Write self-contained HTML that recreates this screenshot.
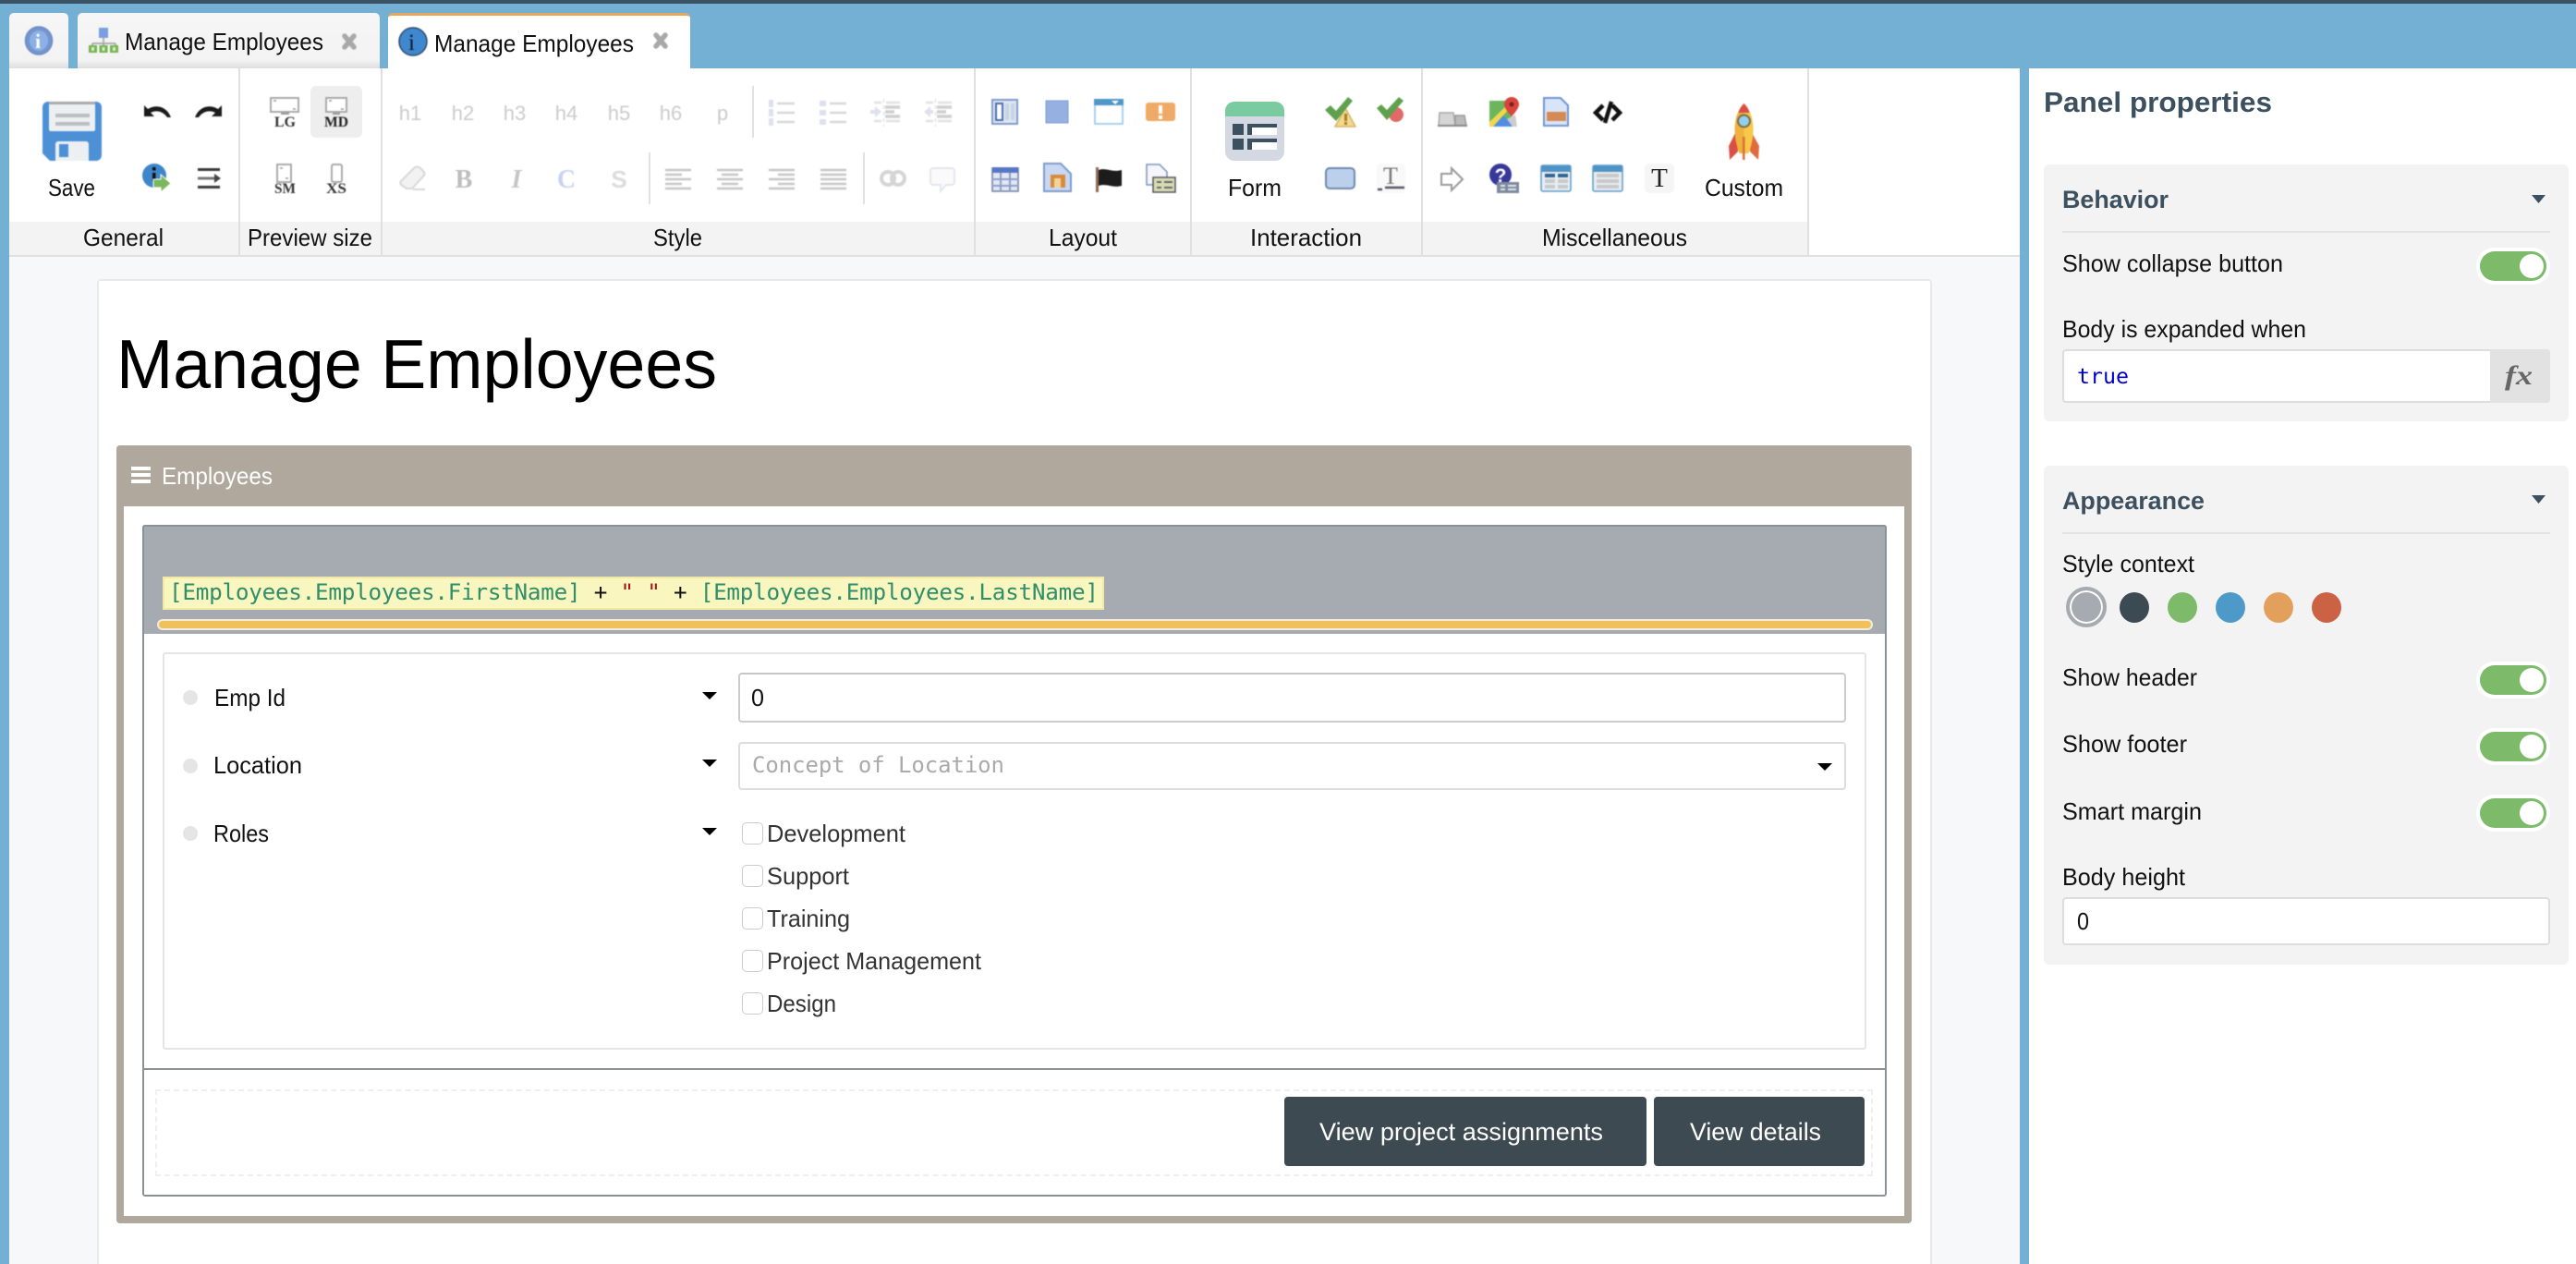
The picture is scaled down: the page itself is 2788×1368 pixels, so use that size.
<!DOCTYPE html>
<html lang="en">
<head>
<meta charset="utf-8">
<title>Manage Employees</title>
<style>
html,body{margin:0;padding:0;width:2788px;height:1368px;overflow:hidden;background:#74b0d4;font-family:"Liberation Sans",sans-serif}
.b{position:absolute;box-sizing:border-box}
.tog{position:absolute;width:72px;height:32px;border-radius:16px;background:#7dbb6b;box-shadow:0 0 0 4px #fff}
.tog:after{content:"";position:absolute;right:3px;top:3px;width:26px;height:26px;border-radius:50%;background:#fff}
.dot{position:absolute;width:32px;height:33px;border-radius:50%;top:641px}
.cb{position:absolute;left:803px;width:23px;height:24px;border:1.5px solid #ccc;border-radius:5px;background:#fff;box-sizing:border-box}
svg{position:absolute;left:0;top:0}
text{font-family:"Liberation Sans",sans-serif}
.m{font-family:"DejaVu Sans Mono",monospace}
.l{font-size:26px;fill:#111}
.bi{filter:blur(.5px)}
</style>
</head>
<body>
<div class="b" style="left:0;top:0;width:2788px;height:1368px;overflow:hidden">
<div class="b" style="left:0;top:0;width:2788px;height:4px;background:#3b5262"></div>

<!-- tabs -->
<div class="b" style="left:10px;top:14px;width:64px;height:60px;background:linear-gradient(#f6f6f6,#f3f3f3 85%,#dedede);border-radius:5px 5px 0 0"></div>
<div class="b" style="left:84px;top:14px;width:327px;height:60px;background:linear-gradient(#f6f6f6,#f3f3f3 85%,#dedede);border-radius:5px 5px 0 0"></div>
<div class="b" style="left:420px;top:14px;width:327px;height:61px;background:#fff;border-top:3px solid #e2a95c;border-radius:5px 5px 0 0"></div>

<!-- main area -->
<div class="b" style="left:10px;top:74px;width:2176px;height:1294px;background:#f7f8fa"></div>
<div class="b" style="left:10px;top:74px;width:2176px;height:204px;background:#fff;border-bottom:2px solid #e0e0e0"></div>
<div class="b" style="left:10px;top:240px;width:1947px;height:36px;background:#f3f3f3"></div>
<div class="b" style="left:258px;top:74px;width:2px;height:202px;background:#e0e0e0"></div>
<div class="b" style="left:412px;top:74px;width:2px;height:202px;background:#e0e0e0"></div>
<div class="b" style="left:1054px;top:74px;width:2px;height:202px;background:#e0e0e0"></div>
<div class="b" style="left:1288px;top:74px;width:2px;height:202px;background:#e0e0e0"></div>
<div class="b" style="left:1538px;top:74px;width:2px;height:202px;background:#e0e0e0"></div>
<div class="b" style="left:1956px;top:74px;width:2px;height:202px;background:#e0e0e0"></div>
<div class="b" style="left:336px;top:93px;width:56px;height:56px;background:#eee;border-radius:6px"></div>
<div class="b" style="left:814px;top:93px;width:2px;height:56px;background:#e2e2e2"></div>
<div class="b" style="left:702px;top:165px;width:2px;height:56px;background:#e2e2e2"></div>
<div class="b" style="left:934px;top:165px;width:2px;height:56px;background:#e2e2e2"></div>

<!-- right panel -->
<div class="b" style="left:2196px;top:74px;width:592px;height:1294px;background:#fff"></div>
<div class="b" style="left:2212px;top:178px;width:568px;height:278px;background:#f3f3f3;border-radius:6px"></div>
<div class="b" style="left:2232px;top:250px;width:528px;height:2px;background:#e4e4e4"></div>
<div class="tog" style="left:2684px;top:272px"></div>
<div class="b" style="left:2232px;top:378px;width:528px;height:58px;background:#fff;border:2px solid #ddd;border-radius:4px"></div>
<div class="b" style="left:2695px;top:378px;width:65px;height:58px;background:#e2e2e2;border-radius:0 4px 4px 0"></div>
<div class="b" style="left:2212px;top:504px;width:568px;height:540px;background:#f3f3f3;border-radius:6px"></div>
<div class="b" style="left:2232px;top:576px;width:528px;height:2px;background:#e4e4e4"></div>
<div class="b" style="left:2236px;top:635px;width:44px;height:44px;border-radius:50%;background:#a5abb0;border:4px solid #a5abb0;box-shadow:inset 0 0 0 2px #fff"></div>
<div class="dot" style="left:2294px;background:#3c4a54"></div>
<div class="dot" style="left:2346px;background:#7dbb6b"></div>
<div class="dot" style="left:2398px;background:#4d9ac9"></div>
<div class="dot" style="left:2450px;background:#e2a05c"></div>
<div class="dot" style="left:2502px;background:#cb6243"></div>
<div class="tog" style="left:2684px;top:720px"></div>
<div class="tog" style="left:2684px;top:792px"></div>
<div class="tog" style="left:2684px;top:864px"></div>
<div class="b" style="left:2232px;top:971px;width:528px;height:52px;background:#fff;border:2px solid #ddd;border-radius:4px"></div>

<!-- page card -->
<div class="b" style="left:105px;top:302px;width:1986px;height:1080px;background:#fff;border:2px solid #e9e9e9;border-radius:4px"></div>
<!-- outer panel -->
<div class="b" style="left:126px;top:482px;width:1943px;height:842px;background:#fff;border:8px solid #b0a89d;border-top:0;border-radius:4px"></div>
<div class="b" style="left:126px;top:482px;width:1943px;height:66px;background:#b0a89d;border-radius:4px 4px 0 0"></div>
<div class="b" style="left:142px;top:505px;width:21px;height:4px;background:#fff"></div>
<div class="b" style="left:142px;top:512px;width:21px;height:4px;background:#fff"></div>
<div class="b" style="left:142px;top:519px;width:21px;height:4px;background:#fff"></div>
<!-- inner panel -->
<div class="b" style="left:154px;top:568px;width:1888px;height:727px;background:#fff;border:2px solid #8b9297;border-radius:3px"></div>
<div class="b" style="left:154px;top:568px;width:1888px;height:118px;background:#a5abb0;border:2px solid #8b9297;border-bottom:0;border-radius:3px 3px 0 0"></div>
<div class="b" style="left:176px;top:624px;width:1019px;height:36px;background:#f9f6bf;border:2px solid #f3e9a6"></div>
<div class="b" style="left:170px;top:670px;width:1857px;height:12px;background:#f0c05c;border:2px solid #f3ecd8;border-radius:6px"></div>
<div class="b" style="left:176px;top:706px;width:1844px;height:430px;background:#fff;border:2px solid #e5e5e5;border-radius:3px"></div>
<div class="b" style="left:198px;top:747px;width:16px;height:16px;border-radius:50%;background:#e5e5e5"></div>
<div class="b" style="left:198px;top:821px;width:16px;height:16px;border-radius:50%;background:#e5e5e5"></div>
<div class="b" style="left:198px;top:894px;width:16px;height:16px;border-radius:50%;background:#e5e5e5"></div>
<div class="b" style="left:799px;top:728px;width:1199px;height:54px;background:#fff;border:2px solid #ccc;border-top-color:#c6c6c6;border-radius:4px"></div>
<div class="b" style="left:799px;top:803px;width:1199px;height:52px;background:#fff;border:2px solid #ddd;border-radius:4px"></div>
<div class="cb" style="top:890px"></div>
<div class="cb" style="top:936px"></div>
<div class="cb" style="top:982px"></div>
<div class="cb" style="top:1028px"></div>
<div class="cb" style="top:1074px"></div>
<div class="b" style="left:154px;top:1156px;width:1888px;height:2px;background:#8b9297"></div>
<div class="b" style="left:168px;top:1179px;width:1859px;height:94px;border:2px dashed #efefef"></div>
<div class="b" style="left:1390px;top:1187px;width:392px;height:75px;background:#3e4a52;border-radius:4px"></div>
<div class="b" style="left:1790px;top:1187px;width:228px;height:75px;background:#3e4a52;border-radius:4px"></div>

<svg width="2788" height="1368" viewBox="0 0 2788 1368" xmlns="http://www.w3.org/2000/svg">
<!-- TEXT -->
<g>
<text class="l" x="135" y="54" textLength="215" lengthAdjust="spacingAndGlyphs">Manage Employees</text>
<text class="l" x="470" y="56" textLength="216" lengthAdjust="spacingAndGlyphs">Manage Employees</text>
<text class="l" x="52" y="212" textLength="51" lengthAdjust="spacingAndGlyphs">Save</text>
<text class="l" x="90" y="266" textLength="87" lengthAdjust="spacingAndGlyphs">General</text>
<text class="l" x="268" y="266" textLength="135" lengthAdjust="spacingAndGlyphs">Preview size</text>
<text class="l" x="707" y="266" textLength="53" lengthAdjust="spacingAndGlyphs">Style</text>
<text class="l" x="1135" y="266" textLength="74" lengthAdjust="spacingAndGlyphs">Layout</text>
<text class="l" x="1353" y="266" textLength="121" lengthAdjust="spacingAndGlyphs">Interaction</text>
<text class="l" x="1669" y="266" textLength="157" lengthAdjust="spacingAndGlyphs">Miscellaneous</text>
<text class="l" x="1329" y="212" textLength="58" lengthAdjust="spacingAndGlyphs">Form</text>
<text class="l" x="1845" y="212" textLength="85" lengthAdjust="spacingAndGlyphs">Custom</text>

<text x="2212" y="121" font-size="31" font-weight="700" fill="#3c5060" textLength="247" lengthAdjust="spacingAndGlyphs">Panel properties</text>
<text x="2232" y="225" font-size="27" font-weight="700" fill="#3c5060" textLength="115" lengthAdjust="spacingAndGlyphs">Behavior</text>
<text class="l" x="2232" y="294" textLength="239" lengthAdjust="spacingAndGlyphs">Show collapse button</text>
<text class="l" x="2232" y="365" textLength="264" lengthAdjust="spacingAndGlyphs">Body is expanded when</text>
<text class="m" x="2248" y="415" font-size="23.400" fill="#0000cc" textLength="56" lengthAdjust="spacingAndGlyphs">true</text>
<text x="2711" y="416" font-size="30" font-style="italic" font-weight="700" fill="#666" style="font-family:'Liberation Serif',serif" textLength="30" lengthAdjust="spacingAndGlyphs">fx</text>
<text x="2232" y="551" font-size="27" font-weight="700" fill="#3c5060" textLength="154" lengthAdjust="spacingAndGlyphs">Appearance</text>
<text class="l" x="2232" y="619" textLength="143" lengthAdjust="spacingAndGlyphs">Style context</text>
<text class="l" x="2232" y="742" textLength="146" lengthAdjust="spacingAndGlyphs">Show header</text>
<text class="l" x="2232" y="814" textLength="135" lengthAdjust="spacingAndGlyphs">Show footer</text>
<text class="l" x="2232" y="887" textLength="151" lengthAdjust="spacingAndGlyphs">Smart margin</text>
<text class="l" x="2232" y="958" textLength="133" lengthAdjust="spacingAndGlyphs">Body height</text>
<text class="l" x="2248" y="1006" textLength="13" lengthAdjust="spacingAndGlyphs">0</text>

<text x="126" y="420" font-size="75" fill="#000" textLength="650" lengthAdjust="spacingAndGlyphs">Manage Employees</text>
<text x="175" y="524" font-size="26" fill="#fff" textLength="120" lengthAdjust="spacingAndGlyphs">Employees</text>
<text class="m" x="183" y="649" font-size="24.300" textLength="1006" lengthAdjust="spacing"><tspan fill="#2f8f6c">[Employees.Employees.FirstName]</tspan><tspan fill="#111"> + </tspan><tspan fill="#a31515">" "</tspan><tspan fill="#111"> + </tspan><tspan fill="#2f8f6c">[Employees.Employees.LastName]</tspan></text>

<text class="l" x="232" y="764" textLength="77" lengthAdjust="spacingAndGlyphs">Emp Id</text>
<text class="l" x="231" y="837" textLength="96" lengthAdjust="spacingAndGlyphs">Location</text>
<text class="l" x="231" y="911" textLength="60" lengthAdjust="spacingAndGlyphs">Roles</text>
<text class="l" x="813" y="764" textLength="14" lengthAdjust="spacingAndGlyphs">0</text>
<text class="m" x="814" y="836" font-size="24" fill="#aaa" textLength="273" lengthAdjust="spacing">Concept of Location</text>
<g>
<text x="830" y="911" fill="#333" font-size="26" textLength="150" lengthAdjust="spacingAndGlyphs">Development</text>
<text x="830" y="957" fill="#333" font-size="26" textLength="89" lengthAdjust="spacingAndGlyphs">Support</text>
<text x="830" y="1003" fill="#333" font-size="26" textLength="90" lengthAdjust="spacingAndGlyphs">Training</text>
<text x="830" y="1049" fill="#333" font-size="26" textLength="232" lengthAdjust="spacingAndGlyphs">Project Management</text>
<text x="830" y="1095" fill="#333" font-size="26" textLength="75" lengthAdjust="spacingAndGlyphs">Design</text>
</g>
<text x="1428" y="1234" font-size="27" fill="#fff" textLength="307" lengthAdjust="spacingAndGlyphs">View project assignments</text>
<text x="1829" y="1234" font-size="27" fill="#fff" textLength="142" lengthAdjust="spacingAndGlyphs">View details</text>
</g>

<!-- carets -->
<g fill="#000">
<path d="M760 749h16l-8 8z"/><path d="M760 822h16l-8 8z"/><path d="M760 896h16l-8 8z"/><path d="M1967 826h16l-8 8z"/>
</g>
<g fill="#3c5060"><path d="M2740 211h15l-7.500 9z"/><path d="M2740 536h15l-7.500 9z"/></g>

<!-- tab icons -->
<g class="bi">
<ellipse cx="42" cy="44" rx="14.500" ry="15" fill="#7495d0" stroke="#6a8cc4" stroke-width="1.500"/>
<ellipse cx="42" cy="44" rx="10" ry="11" fill="#8db0e4"/>
<text x="38" y="52" font-size="22" font-weight="700" fill="#fff" style="font-family:'Liberation Serif',serif">i</text>
<rect x="107" y="30" width="10" height="11" fill="#7a9fe0"/>
<path d="M112 41v5M100 47h25M100 47v3M112 47v3M125 47v3" stroke="#999" stroke-width="1.500" fill="none"/>
<rect x="96" y="49" width="9" height="8" fill="#75b34e"/><rect x="107.500" y="49" width="9" height="8" fill="#75b34e"/><rect x="119" y="49" width="9" height="8" fill="#75b34e"/>
<rect x="99" y="51" width="3" height="4" fill="#dbeec9"/><rect x="110.500" y="51" width="3" height="4" fill="#dbeec9"/><rect x="122" y="51" width="3" height="4" fill="#dbeec9"/>
<path d="M373 39l10 12M383 39l-10 12" stroke="#a8a8a8" stroke-width="5.500" stroke-linecap="round"/>
<circle cx="447" cy="45" r="15" fill="#3f88cf" stroke="#2e4b6b" stroke-width="1.500"/>
<text x="442" y="54" font-size="25" fill="#0c1a2a" style="font-family:'Liberation Serif',serif">i</text>
<path d="M710 38l10 12M720 38l-10 12" stroke="#a8a8a8" stroke-width="5.500" stroke-linecap="round"/>
</g>

<!-- General -->
<g class="bi">
<path d="M52 110h52a6 6 0 0 1 6 6v52a6 6 0 0 1-6 6H54l-8-8v-50a6 6 0 0 1 6-6z" fill="#4e90d6"/>
<rect x="53" y="110" width="50" height="32" rx="2" fill="#ecf0f3"/>
<rect x="53" y="110" width="50" height="3" fill="#a9a9a9"/>
<rect x="60" y="123" width="37" height="4" fill="#b9bfc3"/><rect x="60" y="132" width="37" height="4" fill="#b9bfc3"/>
<path d="M60 174v-18a3 3 0 0 1 3-3h30a3 3 0 0 1 3 3v18z" fill="#ecf0f3"/>
<rect x="64" y="156" width="10" height="14" fill="#4e90d6"/>
<path d="M156 114v12h11l-4-4c6-3 13-2 18 5h4c-4-11-15-15-25-9z" fill="#1b1b1b"/>
<path d="M240 114v12h-11l4-4c-6-3-13-2-18 5h-4c4-11 15-15 25-9z" fill="#1b1b1b"/>
<circle cx="167" cy="190" r="13" fill="#3e85c9"/>
<rect x="165" y="181" width="3.500" height="3.500" fill="#111"/><rect x="165" y="187" width="3.500" height="9" fill="#111"/>
<path d="M166 194h8v-5l11 9.500-11 9.500v-5h-8z" fill="#7cb85b" stroke="#fff" stroke-width="1"/>
<path d="M214 183.500h24M214 202.500h24" stroke="#3a3a3a" stroke-width="3"/>
<path d="M214 193h19" stroke="#777" stroke-width="3"/><path d="M232 188l7 5-7 5z" fill="#444"/>
</g>

<!-- Preview size -->
<g class="bi">
<rect x="293" y="106" width="30" height="15" fill="#fff" stroke="#aaa" stroke-width="2"/><rect x="304" y="122" width="9" height="2" fill="#999"/>
<path d="M296 109h3M320 118h-3" stroke="#999" stroke-width="1.500"/>
<text x="297" y="137" font-size="16" font-weight="700" fill="#333" style="font-family:'Liberation Serif',serif" textLength="23" lengthAdjust="spacingAndGlyphs">LG</text>
<rect x="353" y="106" width="22" height="15" fill="#fff" stroke="#aaa" stroke-width="2"/><rect x="360" y="122" width="8" height="2" fill="#999"/>
<path d="M356 109h3M372 118h-3" stroke="#999" stroke-width="1.500"/>
<text x="351" y="137" font-size="16" font-weight="700" fill="#222" style="font-family:'Liberation Serif',serif" textLength="26" lengthAdjust="spacingAndGlyphs">MD</text>
<rect x="300" y="178" width="15" height="19" fill="#fff" stroke="#aaa" stroke-width="2"/>
<path d="M303 182h3M312 193h-3" stroke="#999" stroke-width="1.500"/>
<text x="297" y="209" font-size="16" font-weight="700" fill="#333" style="font-family:'Liberation Serif',serif" textLength="23" lengthAdjust="spacingAndGlyphs">SM</text>
<rect x="359" y="178" width="11" height="19" rx="2" fill="#fff" stroke="#aaa" stroke-width="2"/>
<text x="353" y="209" font-size="16" font-weight="700" fill="#333" style="font-family:'Liberation Serif',serif" textLength="22" lengthAdjust="spacingAndGlyphs">XS</text>
</g>

<!-- Style -->
<g class="bi">
<text x="444" y="130" text-anchor="middle" fill="#cbcbcb" font-size="22">h1</text>
<text x="501" y="130" text-anchor="middle" fill="#cbcbcb" font-size="22">h2</text>
<text x="557" y="130" text-anchor="middle" fill="#cbcbcb" font-size="22">h3</text>
<text x="613" y="130" text-anchor="middle" fill="#cbcbcb" font-size="22">h4</text>
<text x="670" y="130" text-anchor="middle" fill="#cbcbcb" font-size="22">h5</text>
<text x="726" y="130" text-anchor="middle" fill="#cbcbcb" font-size="22">h6</text>
<text x="782" y="130" text-anchor="middle" fill="#cbcbcb" font-size="22">p</text>
<text x="502" y="203" text-anchor="middle" fill="#bdbdbd" font-size="28" font-weight="700" style="font-family:'Liberation Serif',serif">B</text>
<text x="559" y="203" text-anchor="middle" fill="#c5c5c5" font-size="28" font-style="italic" font-weight="700" style="font-family:'Liberation Serif',serif">I</text>
<text x="613" y="203" text-anchor="middle" fill="#c8d3f2" font-size="28" font-weight="700" style="font-family:'Liberation Serif',serif">C</text>
<text x="670" y="203" text-anchor="middle" fill="#dcdcdc" font-size="26" font-weight="700">S</text>
</g>
<g class="bi">
<path d="M434 196l14-14c2-2 5-2 7 0l3 3c2 2 2 4 0 6l-12 13h-6l-6-4c-1-1-1-3 0-4z" fill="#f2f2f2" stroke="#d8d8d8" stroke-width="2"/>
<path d="M447 205h13" stroke="#d8d8d8" stroke-width="2"/>
<g fill="none" stroke="#c6c6c6" stroke-width="2.500">
<path d="M720 184h28M720 189h18M720 194h28M720 199h18M720 204h28"/>
<path d="M776 184h28M781 189h18M776 194h28M781 199h18M776 204h28"/>
<path d="M832 184h28M842 189h18M832 194h28M842 199h18M832 204h28"/>
<path d="M888 184h28M888 189h28M888 194h28M888 199h28M888 204h28"/>
</g>
<g fill="none" stroke="#d8d8d8" stroke-width="2.500">
<path d="M841 112h19M841 122h19M841 132h19"/>
<path d="M898 112h18M898 122h18M898 132h18"/>
<path d="M946 111h8M959 111h15M946 131h8M959 131h15" stroke="#e2e2e2"/>
<path d="M1002 111h8M1015 111h15M1002 131h8M1015 131h15" stroke="#e2e2e2"/>
</g>
<g fill="none" stroke="#cfcfcf" stroke-width="3.500">
<path d="M958 116h16M958 121h10M958 126h16"/>
<path d="M1014 116h16M1014 121h10M1014 126h16"/>
</g>
<path d="M956.500 107v30M1012.500 107v30" stroke="#e4e4e4" stroke-width="1.500" stroke-dasharray="4 3"/>
<g fill="#dfe0ef">
<rect x="832" y="108" width="5" height="8"/><rect x="832" y="118" width="5" height="8"/><rect x="832" y="128" width="5" height="8"/>
<rect x="887" y="109" width="7" height="6"/><rect x="887" y="119" width="7" height="6"/><rect x="887" y="129" width="7" height="6"/>
<path d="M942 119h5v-4l7 6-7 6v-4h-5zM1007 119h3v4h-3v4l-7-6 7-6z"/>
</g>
<circle cx="961" cy="193" r="7" fill="none" stroke="#d5d5d5" stroke-width="4"/><circle cx="972" cy="193" r="7" fill="none" stroke="#d5d5d5" stroke-width="4"/>
<path d="M1010 182h20a3 3 0 0 1 3 3v12a3 3 0 0 1-3 3h-6l-6 7v-7h-8a3 3 0 0 1-3-3v-12a3 3 0 0 1 3-3z" fill="#fafafa" stroke="#e4e6ee" stroke-width="2"/>
</g>

<!-- Layout -->
<g class="bi">
<rect x="1074" y="108" width="27" height="26" fill="#dfe6f3" stroke="#7f9acb" stroke-width="2"/>
<rect x="1078" y="112" width="7" height="18" fill="#fff" stroke="#4a6fa8" stroke-width="2"/>
<rect x="1088" y="112" width="4" height="18" fill="#c9d3e4"/><rect x="1094" y="112" width="4" height="18" fill="#c9d3e4"/>
<rect x="1132" y="109" width="24" height="24" fill="#96b0e2" stroke="#7e9cd4" stroke-width="1"/>
<rect x="1185" y="108" width="30" height="26" fill="#fff" stroke="#a7d0ec" stroke-width="2"/>
<rect x="1184" y="107" width="32" height="7" fill="#4f97c7"/><path d="M1203 109h8l-4 4z" fill="#fff"/>
<rect x="1240" y="111" width="32" height="20" rx="3" fill="#eeaa66"/>
<rect x="1254" y="114" width="4" height="9" fill="#fff"/><rect x="1254" y="125" width="4" height="4" fill="#fff"/>
<rect x="1074" y="182" width="28" height="25" fill="#e3e7f3" stroke="#6c7fa6" stroke-width="1.500"/>
<rect x="1074" y="181" width="28" height="6" fill="#5577c4"/>
<path d="M1083 187v20M1093 187v20M1074 194h28M1074 201h28" stroke="#8c9fcb" stroke-width="2"/>
<path d="M1130 177h18l11 11v19h-29z" fill="#c9d8f2" stroke="#7f9acb" stroke-width="2"/>
<rect x="1137" y="189" width="16" height="14" fill="#d88a3c"/><rect x="1141" y="193" width="7" height="10" fill="#f4d499"/>
<rect x="1186" y="181" width="3" height="27" fill="#8b6b55"/>
<path d="M1189 184c8-3 14 3 25 0v17c-10 3-16-3-25 0z" fill="#1c1c1c"/>
<path d="M1241 178h14l8 8v14h-22z" fill="#f4f6fb" stroke="#7f92b8" stroke-width="1.500"/>
<rect x="1248" y="192" width="24" height="16" fill="#d8dcae" stroke="#556" stroke-width="1.500"/>
<path d="M1252 197h5M1252 203h5M1260 197h9M1260 203h9" stroke="#667" stroke-width="2"/>
</g>

<!-- Form -->
<g>
<rect x="1326" y="110" width="64" height="64" rx="10" fill="#d3d8e3"/>
<path d="M1326 126v-6a10 10 0 0 1 10-10h44a10 10 0 0 1 10 10v6z" fill="#7acb9f"/>
<rect x="1334" y="134" width="12" height="12" fill="#3c5060"/><rect x="1334" y="150" width="12" height="12" fill="#3c5060"/>
<rect x="1350" y="134" width="32" height="12" fill="#3c5060"/><rect x="1350" y="150" width="32" height="12" fill="#3c5060"/>
<rect x="1355" y="138" width="27" height="8" fill="#fff"/><rect x="1355" y="154" width="27" height="8" fill="#fff"/>
</g>

<!-- Interaction -->
<g class="bi">
<path d="M1456 117l11 20h-22z" fill="#f2d98c" stroke="#d7b45e" stroke-width="1.500"/>
<rect x="1455" y="123" width="3" height="8" fill="#a77c2a"/><rect x="1455" y="132" width="3" height="3" fill="#a77c2a"/>
<path d="M1434 119l6-5 6 6 13-15 5 4-18 22z" fill="#5fa04e"/>
<circle cx="1511" cy="124" r="8" fill="#e26a66"/>
<path d="M1490 117l5-4 6 6 13-14 5 4-18 21z" fill="#5fa04e"/>
<rect x="1435" y="182" width="31" height="22" rx="4" fill="#bcd0ec" stroke="#6e88ad" stroke-width="2"/>
<rect x="1490" y="177" width="31" height="32" rx="3" fill="#f6f6f6" opacity=".7"/>
<text x="1505" y="199" text-anchor="middle" font-size="26" fill="#777" style="font-family:'Liberation Serif',serif">T</text>
<path d="M1491 205h5M1499 203h21" stroke="#556" stroke-width="2.500"/>
</g>

<!-- Miscellaneous -->
<g class="bi">
<path d="M1558 122h15l2 14h-18z" fill="#d5d5d5" stroke="#aaa" stroke-width="1.500"/>
<path d="M1575 125h10l2 11h-12z" fill="#bbb" stroke="#999" stroke-width="1.500"/>
<rect x="1556" y="135" width="32" height="2" fill="#888"/>
<path d="M1612 109h24v28h-24z" fill="#6cb55c"/>
<path d="M1612 137l15-12 12 12z" fill="#4f8ee3"/><path d="M1612 132l24-23v6l-20 22h-4z" fill="#f0d74c"/>
<path d="M1637 137l-6-8 9-5 2 13z" fill="#ccc"/>
<path d="M1636 105c-5 0-8 4-8 8 0 5 8 13 8 13s8-8 8-13c0-4-3-8-8-8z" fill="#d8453c"/><circle cx="1636" cy="113" r="2.500" fill="#7a1f1a"/>
<path d="M1671 106h18l8 8v22h-26z" fill="#d8e5f8" stroke="#6e96d0" stroke-width="2"/>
<rect x="1674" y="121" width="21" height="10" fill="#d58a55"/>
<path d="M1735 114l-8 8 8 8M1745 114l8 8-8 8M1744 110l-7 23" fill="none" stroke="#111" stroke-width="4.500"/>

<path d="M1560 188h11v-6l12 12-12 12v-6h-11z" fill="#fff" stroke="#999" stroke-width="2"/>
<circle cx="1624" cy="189" r="12" fill="#38389b"/>
<text x="1624" y="197" text-anchor="middle" font-size="21" font-weight="700" fill="#fff">?</text>
<rect x="1620" y="197" width="24" height="12" fill="#7d8a9c"/>
<path d="M1624 201h5M1624 205h5M1632 201h9M1632 205h9" stroke="#e3e6ee" stroke-width="2"/>

<rect x="1668" y="179" width="32" height="28" rx="2" fill="#e7eef3"/><rect x="1668" y="179" width="32" height="7" fill="#4f93c4"/>
<rect x="1668" y="179" width="32" height="28" rx="2" fill="none" stroke="#5d9ac8" stroke-width="1.500"/>
<rect x="1672" y="188" width="11" height="4" fill="#2f6690"/><rect x="1686" y="188" width="11" height="4" fill="#2f6690"/>
<rect x="1672" y="194" width="11" height="4" fill="#c9c9c9"/><rect x="1686" y="194" width="11" height="4" fill="#c9c9c9"/>
<rect x="1672" y="200" width="11" height="4" fill="#c9c9c9"/><rect x="1686" y="200" width="11" height="4" fill="#c9c9c9"/>

<rect x="1724" y="179" width="32" height="28" rx="2" fill="#e7eef3"/><rect x="1724" y="179" width="32" height="7" fill="#4f93c4"/>
<rect x="1724" y="179" width="32" height="28" rx="2" fill="none" stroke="#5d9ac8" stroke-width="1.500"/>
<rect x="1728" y="188" width="24" height="4" fill="#c9c9c9"/><rect x="1728" y="194" width="24" height="4" fill="#c9c9c9"/><rect x="1728" y="200" width="24" height="4" fill="#c9c9c9"/>

<rect x="1780" y="177" width="32" height="32" rx="5" fill="#f5f5f5"/>
</g>
<text x="1796" y="202" text-anchor="middle" font-size="29" fill="#222" style="font-family:'Liberation Serif',serif">T</text>

<!-- Rocket -->
<g class="bi">
<path d="M1880 140l-9 18 1 15 9-9z" fill="#d94f44"/>
<path d="M1894 140l10 18-1 15-9-9z" fill="#e06b3f"/>
<path d="M1887.500 112c-7 7-10 17-10 28 0 9 2 18 5 26h5z" fill="#eeb23d"/>
<path d="M1887.500 112c7 7 10 17 10 28 0 9-2 18-5 26h-5z" fill="#f6c949"/>
<path d="M1887.500 112c-3 3-5 6-6 10h12c-1-4-3-7-6-10z" fill="#d94f44"/>
<circle cx="1887.500" cy="131" r="6.500" fill="#8ed0ee" stroke="#7e6a44" stroke-width="2"/>
<rect x="1886" y="148" width="2.500" height="25" fill="#d9703a"/>
</g>
</svg>
</div>
</body>
</html>
